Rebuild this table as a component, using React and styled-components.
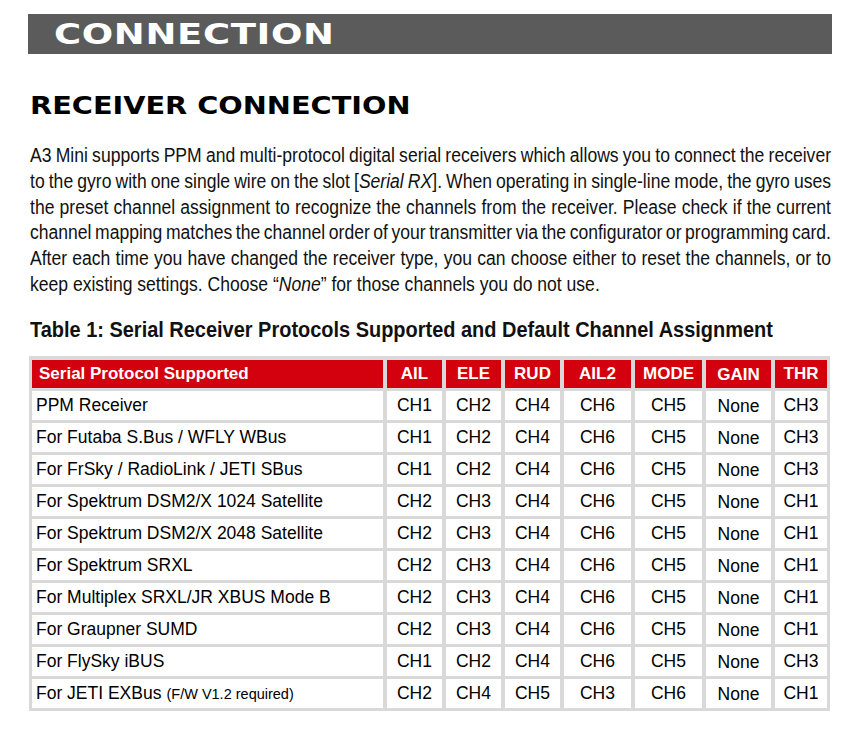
import React from 'react'
import styled, { createGlobalStyle } from 'styled-components'

const GlobalStyle = createGlobalStyle`
  html, body { margin: 0; padding: 0; background: #fff; overflow-x: hidden; }
  body { font-family: "Liberation Sans", Arial, sans-serif; color: #111; }
`

const columns = ['AIL', 'ELE', 'RUD', 'AIL2', 'MODE', 'GAIN', 'THR']

const rows = [
  ['PPM Receiver', null, 'CH1', 'CH2', 'CH4', 'CH6', 'CH5', 'None', 'CH3'],
  ['For Futaba S.Bus / WFLY WBus', null, 'CH1', 'CH2', 'CH4', 'CH6', 'CH5', 'None', 'CH3'],
  ['For FrSky / RadioLink / JETI SBus', null, 'CH1', 'CH2', 'CH4', 'CH6', 'CH5', 'None', 'CH3'],
  ['For Spektrum DSM2/X 1024 Satellite', null, 'CH2', 'CH3', 'CH4', 'CH6', 'CH5', 'None', 'CH1'],
  ['For Spektrum DSM2/X 2048 Satellite', null, 'CH2', 'CH3', 'CH4', 'CH6', 'CH5', 'None', 'CH1'],
  ['For Spektrum SRXL', null, 'CH2', 'CH3', 'CH4', 'CH6', 'CH5', 'None', 'CH1'],
  ['For Multiplex SRXL/JR XBUS Mode B', null, 'CH2', 'CH3', 'CH4', 'CH6', 'CH5', 'None', 'CH1'],
  ['For Graupner SUMD', null, 'CH2', 'CH3', 'CH4', 'CH6', 'CH5', 'None', 'CH1'],
  ['For FlySky iBUS', null, 'CH1', 'CH2', 'CH4', 'CH6', 'CH5', 'None', 'CH3'],
  ['For JETI EXBus', '(F/W V1.2 required)', 'CH2', 'CH4', 'CH5', 'CH3', 'CH6', 'None', 'CH1'],
]

function App() {
  return (
    <Page>
      <GlobalStyle />
      <SectionBar>
        <Wide>CONNECTION</Wide>
      </SectionBar>

      <SubHeading>
        <Wide>RECEIVER CONNECTION</Wide>
      </SubHeading>

      <Paragraph>
        <Line>A3 Mini supports PPM and multi-protocol digital serial receivers which allows you to connect the receiver</Line>
        <Line>to the gyro with one single wire on the slot [<i>Serial RX</i>]. When operating in single-line mode, the gyro uses</Line>
        <Line>the preset channel assignment to recognize the channels from the receiver. Please check if the current</Line>
        <Line>channel mapping matches the channel order of your transmitter via the configurator or programming card.</Line>
        <Line>After each time you have changed the receiver type, you can choose either to reset the channels, or to</Line>
        <Line $last>keep existing settings. Choose “<i>None</i>” for those channels you do not use.</Line>
      </Paragraph>

      <TableTitle>Table 1: Serial Receiver Protocols Supported and Default Channel Assignment</TableTitle>

      <Table>
        <HeadCell $left>Serial Protocol Supported</HeadCell>
        {columns.map((c) => (
          <HeadCell key={c} $low={c === 'GAIN'}>{c}</HeadCell>
        ))}
        {rows.map(([name, note, ...chs]) => (
          <React.Fragment key={name}>
            <Cell $left>
              {name}
              {note && <Note>{note}</Note>}
            </Cell>
            {chs.map((ch, i) => (
              <Cell key={i} $low={i === 5}>{ch}</Cell>
            ))}
          </React.Fragment>
        ))}
      </Table>
    </Page>
  )
}

const Page = styled.div`
  width: 854px;
  padding: 14px 0 0;
  box-sizing: border-box;
`

const Wide = styled.span`
  display: inline-block;
  transform-origin: left center;
  transform: scaleX(1.32);
  white-space: nowrap;
`

const SectionBar = styled.div`
  margin: 0 22px 0 28px;
  height: 40px;
  background: #5b5b5b;
  color: #fff;
  display: flex;
  align-items: center;
  padding-left: 26px;
  font-family: "DejaVu Sans", sans-serif;
  font-weight: 700;
  font-size: 28px;
  letter-spacing: 0.5px;
`

const SubHeading = styled.h2`
  margin: 38px 0 0 30px;
  font-family: "DejaVu Sans", sans-serif;
  font-weight: 700;
  font-size: 25px;
  line-height: 28px;
  color: #000;
  ${Wide} { transform: scaleX(1.15); }
`

const Paragraph = styled.div`
  margin: 23px 23px 0 30px;
  font-family: "Liberation Sans", Arial, sans-serif;
  font-size: 19.5px;
  line-height: 25.8px;
  color: #111;
`

const Line = styled.div`
  width: calc(100% / 0.9);
  transform: scaleX(0.9);
  transform-origin: left center;
  text-align: ${(p) => (p.$last ? 'left' : 'justify')};
  text-align-last: ${(p) => (p.$last ? 'left' : 'justify')};
  word-spacing: ${(p) => (p.$last ? 'normal' : '-2.5px')};
  white-space: nowrap;
`

const TableTitle = styled.div`
  margin: 20px 0 0 30px;
  width: calc(794px / 0.907);
  transform: scaleX(0.907);
  transform-origin: left center;
  font-family: "Liberation Sans", Arial, sans-serif;
  font-weight: 700;
  font-size: 22px;
  line-height: 24px;
  color: #111;
  white-space: nowrap;
`

const Table = styled.div`
  margin: 14px 23px 0 29px;
  display: grid;
  grid-template-columns: 351px 55px 55px 55px 67px 67px 65px 52px;
  grid-template-rows: 28px;
  grid-auto-rows: 29px;
  gap: 3px 4px;
  padding: 4px 3px 3px;
  background: #d9d9d9;
  width: fit-content;
  font-family: "Liberation Sans", Arial, sans-serif;
`

const HeadCell = styled.div`
  background: #d3000d;
  color: #fff;
  font-weight: 700;
  font-size: 17px;
  display: flex;
  align-items: center;
  justify-content: ${(p) => (p.$left ? 'flex-start' : 'center')};
  padding-left: ${(p) => (p.$left ? '7px' : '0')};
  padding-top: ${(p) => (p.$low ? '3px' : '0')};
  box-sizing: border-box;
  white-space: nowrap;
`

const Cell = styled.div`
  background: #fff;
  color: #000;
  font-size: 17.5px;
  display: flex;
  align-items: center;
  justify-content: ${(p) => (p.$left ? 'flex-start' : 'center')};
  padding-left: ${(p) => (p.$left ? '4px' : '0')};
  padding-top: ${(p) => (p.$low ? '3px' : '0')};
  box-sizing: border-box;
  white-space: nowrap;
`

const Note = styled.span`
  font-size: 14.5px;
  margin-left: 5px;
  padding-top: 2px;
`

export default App
